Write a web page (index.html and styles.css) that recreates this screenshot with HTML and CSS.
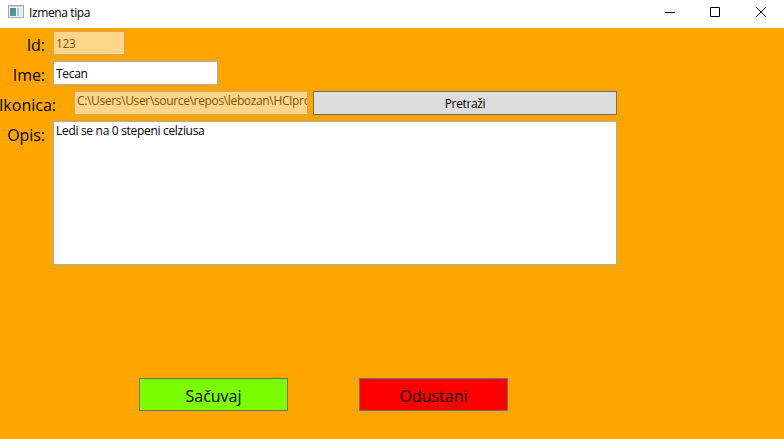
FILE: index.html
```html
<!DOCTYPE html>
<html lang="sr-Latn">
<head>
<meta charset="utf-8">
<title>Izmena tipa</title>
<link rel="stylesheet" href="styles.css">
</head>
<body>
<header class="titlebar">
  <svg class="app-icon" width="16" height="14" viewBox="0 0 16 14">
    <defs><linearGradient id="pane" x1="0" y1="0" x2="1" y2="1"><stop offset="0" stop-color="#4e83b4"/><stop offset="1" stop-color="#50a575"/></linearGradient></defs>
    <rect x=".5" y=".5" width="15" height="12" fill="#f3f3f3" stroke="#a4a7aa"/>
    <path d="M1 1.5h14" stroke="#d4d7da"/>
    <rect x="2" y="3" width="6" height="8" fill="url(#pane)"/>
    <rect x="9" y="3" width="2" height="8" fill="#a9cbd8"/>
    <rect x="12" y="3" width="2" height="8" fill="#dfe7ec"/>
  </svg>
  <h1 class="title">Izmena tipa</h1>
  <nav class="controls">
    <svg width="10" height="10"><path d="M0 5.5h10" stroke="#000"/></svg>
    <svg width="10" height="10"><path d="M.5.5h9v9h-9z" fill="none" stroke="#000"/></svg>
    <svg width="10" height="10"><path d="M0 0l10 10M10 0L0 10" stroke="#000"/></svg>
  </nav>
</header>
<main class="form">
  <div class="row">
    <label class="label">Id:</label>
    <div class="field disabled id">123</div>
  </div>
  <div class="row">
    <label class="label">Ime:</label>
    <div class="field name">Tecan</div>
  </div>
  <div class="row">
    <label class="label wide">Ikonica:</label>
    <div class="field disabled path">C:\Users\User\source\repos\lebozan\HCIproj</div>
    <button class="button browse">Pretraži</button>
  </div>
  <div class="row">
    <label class="label">Opis:</label>
    <div class="field description">Ledi se na 0 stepeni celziusa</div>
  </div>
  <div class="actions">
    <button class="button action save">Sačuvaj</button>
    <button class="button action cancel">Odustani</button>
  </div>
</main>
</body>
</html>
```
FILE: styles.css
```css
* { box-sizing: border-box; }
body {
  margin: 0;
  width: 784px;
  height: 439px;
  overflow: hidden;
  background: #ffa500;
  color: #000;
  font: 12px/16px "Open Sans", sans-serif;
}
.titlebar {
  display: flex;
  height: 28px;
  padding: 5px 18px 0 8px;
  background: #fff;
}
.app-icon { margin-right: 5px; }
.title { margin: 0; font-size: 12px; font-weight: 400; line-height: 16px; letter-spacing: -.38px; }
.controls { display: flex; gap: 35px; margin: 2px 0 0 auto; }
.controls svg:last-child { margin-left: 1px; }
.form { display: flex; flex-direction: column; gap: 6px; padding-top: 3px; }
.row { display: flex; }
.label {
  display: flex;
  justify-content: flex-end;
  width: 45px;
  height: 24px;
  margin-right: 8px;
  font-size: 16px;
  line-height: 28px;
  letter-spacing: -.05px;
  white-space: nowrap;
}
.label.wide { width: 56px; margin-right: 18px; letter-spacing: 0; }
.field {
  height: 24px;
  padding: 4px 2px 2px;
  border: 1px solid #abadb3;
  background: #fff;
  letter-spacing: -.31px;
  overflow: hidden;
  white-space: nowrap;
}
.disabled { border-color: #d2a85f; background: #ffd58c; color: #805300; }
.id { width: 72px; }
.name { width: 165px; }
.path { width: 234px; margin-right: 5px; padding-top: 1px; letter-spacing: -.35px; }
.description { width: 564px; height: 144px; padding-top: 1px; }
.button {
  padding: 0;
  border: 1px solid #707070;
  background: #ddd;
  color: #000;
  font: inherit;
}
.browse { width: 304px; height: 24px; padding-top: 2px; letter-spacing: -.35px; }
.actions { display: flex; gap: 71px; margin: 107px 0 0 139px; }
.action { width: 149px; height: 33px; padding-top: 3px; font-size: 16px; line-height: 22px; }
.save { background: #7cfc00; }
.cancel { background: #f00; }
```
